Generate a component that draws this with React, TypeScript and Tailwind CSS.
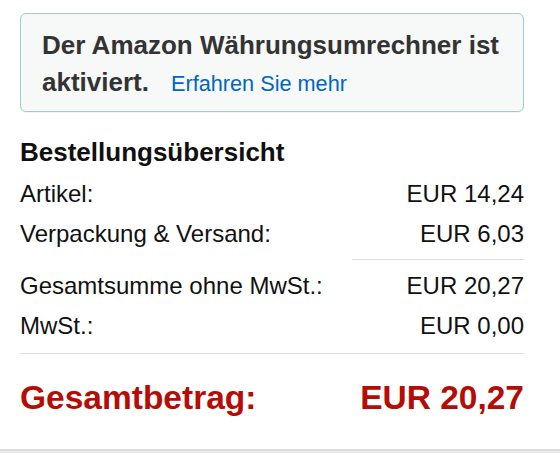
import React from "react";

const font = { fontFamily: '"Liberation Sans", Arial, sans-serif' };

function Row({ label, value }: { label: string; value: string }) {
  return (
    <div className="flex justify-between h-[40px] leading-[40px] text-[24px] text-[#111111]">
      <span>{label}</span>
      <span>{value}</span>
    </div>
  );
}

export default function App() {
  return (
    <div className="w-[560px] h-[454px] bg-white overflow-hidden" style={font}>
      <div className="pl-[20px] pr-[36px] pt-[13px]">
        <div className="border border-[#a9c7d3] rounded-[6px] bg-[#f7f8f8] px-[21px] pt-[13px] pb-[9px] shadow-[0_1px_1px_rgba(0,0,0,0.05)]">
          <div className="text-[26px] leading-[37px] font-bold text-[#333333]">
            Der Amazon Währungsumrechner ist
            <br />
            aktiviert.
            <span className="ml-[22px] text-[21.7px] font-normal text-[#0066c0]">
              Erfahren Sie mehr
            </span>
          </div>
        </div>

        <div className="mt-[24px] text-[26px] leading-[32px] font-bold text-[#111111]">
          Bestellungsübersicht
        </div>
        <div className="mt-[6px]">
          <Row label="Artikel:" value="EUR 14,24" />
          <Row label="Verpackung & Versand:" value="EUR 6,03" />
        </div>
        <div className="flex justify-end mt-[5px]">
          <div className="w-[172px] h-px bg-[#dddddd]" />
        </div>
        <div className="mt-[6px]">
          <Row label="Gesamtsumme ohne MwSt.:" value="EUR 20,27" />
          <Row label="MwSt.:" value="EUR 0,00" />
        </div>
        <div className="mt-[7px] h-px bg-[#dddddd]" />
        <div className="mt-[24px] flex justify-between text-[33.5px] leading-[40px] font-bold text-[#b60c06]">
          <span>Gesamtbetrag:</span>
          <span>EUR 20,27</span>
        </div>
      </div>
      <div className="mt-[31px] h-[2px] bg-[#dcdcdc]" />
      <div className="h-[2px] bg-[#ececec]" />
    </div>
  );
}
